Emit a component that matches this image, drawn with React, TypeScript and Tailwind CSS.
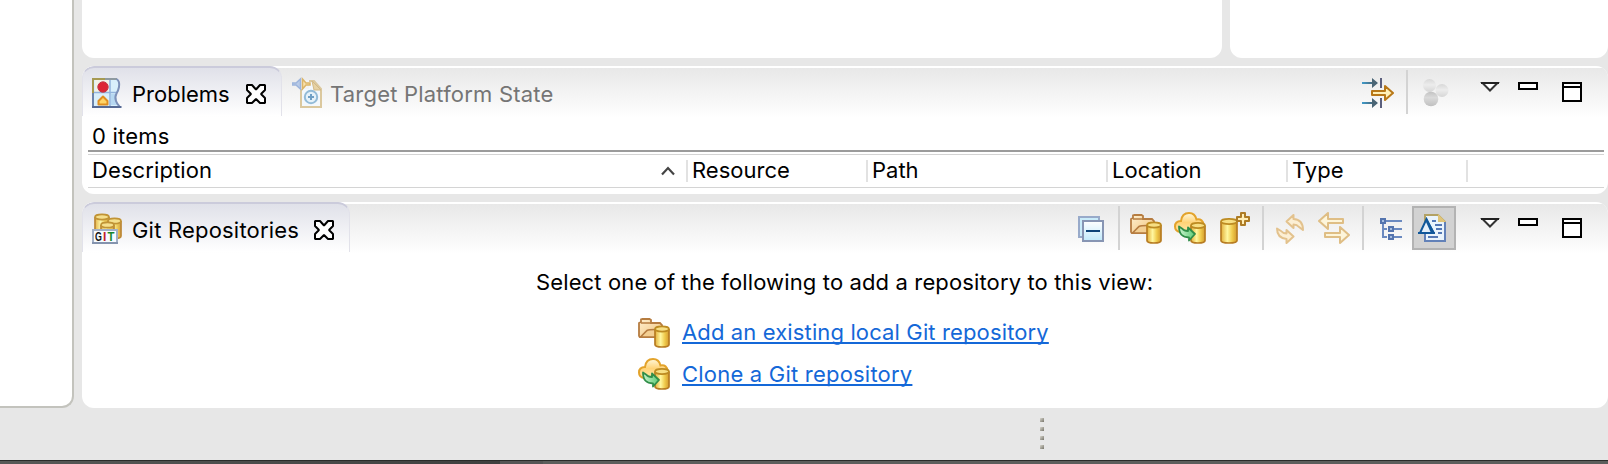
import React from "react";

type IconProps = { className?: string };

const Svg = ({ className = "", children, w = 32, h = 32 }: { className?: string; children: React.ReactNode; w?: number; h?: number }) => (
  <svg className={`block shrink-0 ${className}`} width={w} height={h} viewBox={`0 0 ${w} ${h}`} fill="none">
    {children}
  </svg>
);

const Gradients = () => (
  <svg className="absolute size-0" aria-hidden="true">
    <defs>
      <linearGradient id="gold" x1="0" x2="1" y1="0" y2="0">
        <stop offset="0" stopColor="#e3ae38" />
        <stop offset="0.4" stopColor="#fff7a0" />
        <stop offset="0.7" stopColor="#f0cb4c" />
        <stop offset="1" stopColor="#d39a2c" />
      </linearGradient>
      <linearGradient id="folder" x1="0" x2="1" y1="0" y2="1">
        <stop offset="0" stopColor="#fff0cf" />
        <stop offset="1" stopColor="#f0c27c" />
      </linearGradient>
      <linearGradient id="cloud" x1="0" x2="0" y1="0" y2="1">
        <stop offset="0" stopColor="#fff8dc" />
        <stop offset="0.5" stopColor="#ffd377" />
        <stop offset="1" stopColor="#ffe7a8" />
      </linearGradient>
      <linearGradient id="green" x1="0" x2="1" y1="0" y2="0">
        <stop offset="0" stopColor="#c9f2ce" />
        <stop offset="1" stopColor="#5dcb74" />
      </linearGradient>
      <linearGradient id="pane" x1="0" x2="0" y1="0" y2="1">
        <stop offset="0" stopColor="#ffffff" />
        <stop offset="1" stopColor="#bfe9fb" />
      </linearGradient>
      <linearGradient id="shaft" x1="0" x2="1" y1="0" y2="0">
        <stop offset="0" stopColor="#3f9bcb" />
        <stop offset="1" stopColor="#4a6474" />
      </linearGradient>
      <linearGradient id="ball" x1="0" x2="0" y1="0" y2="1">
        <stop offset="0" stopColor="#d8d8d8" />
        <stop offset="0.45" stopColor="#ececec" />
        <stop offset="1" stopColor="#d6d6d6" />
      </linearGradient>
      <linearGradient id="ballDark" x1="0" x2="0" y1="0" y2="1">
        <stop offset="0" stopColor="#c2c2c2" />
        <stop offset="0.4" stopColor="#dadada" />
        <stop offset="1" stopColor="#c0c0c0" />
      </linearGradient>
    </defs>
  </svg>
);

const Cylinder = ({ x, y, w, h }: { x: number; y: number; w: number; h: number }) => (
  <g>
    <path
      d={`M${x + 1} ${y + 3.5}V${y + h - 3.5}q0 2.5 ${w / 2 - 1} 2.5t${w / 2 - 1} -2.5V${y + 3.5}`}
      fill="url(#gold)"
      stroke="#b77c22"
      strokeWidth="1.7"
    />
    <ellipse cx={x + w / 2} cy={y + 3.5} rx={w / 2 - 1} ry="2.6" fill="#f7df83" stroke="#bd8b22" strokeWidth="1.7" />
  </g>
);

const ProblemsIcon = ({ className }: IconProps) => (
  <Svg className={className}>
    <path d="M1 3H25Q28 5 27.500 11Q27 15 25 18Q23.500 21 25 25Q26 28 28.500 31H1Z" fill="#d9effb" />
    <path d="M3 4H17V16H3Z" fill="#f2f3e6" />
    <path d="M19 18H23.500Q23 22 25.500 29H19Z" fill="#b7d8f1" />
    <path d="M2 16.500H25M18 4V30" stroke="#92b3dc" strokeWidth="1.500" />
    <path d="M1 31V3H13" stroke="#a69a52" strokeWidth="2" />
    <path d="M13 3H25" stroke="#8f9aa0" strokeWidth="2" />
    <path d="M24.500 3Q28 5 27 11Q26.500 14 24.500 17.500Q22.500 21 24 25Q25 28 27.500 30.500" stroke="#7d90b8" strokeWidth="2" />
    <path d="M1 17V31" stroke="#6c84ab" strokeWidth="2" />
    <path d="M0 31H29.500" stroke="#566a95" strokeWidth="2" />
    <circle cx="11" cy="11" r="5.200" fill="#dd2634" stroke="#c23a49" strokeWidth="1" />
    <path d="M6.500 28.500V25L11 20.500L15.500 25V28.500Z" fill="#ffd467" stroke="#e08f20" strokeWidth="2" strokeLinejoin="round" />
  </Svg>
);

const TargetIcon = ({ className }: IconProps) => (
  <Svg className={className}>
    <path d="M9 11V31H29V13L22 5H14" fill="#f3f8fc" stroke="#dbc89e" strokeWidth="2" />
    <path d="M20 5L29 14H22Z" fill="#e6d2a4" stroke="#d3b986" strokeWidth="1" />
    <path d="M8 4H17V13H8Z" fill="#f3f3f3" />
    <path d="M0 7H4L8.500 3V13L4 9H0Z" fill="#b9cbe7" stroke="#9db5dc" strokeWidth="1.500" />
    <path d="M10.500 3L14 7H18V9H14L10.500 13Z" fill="#f8e2af" stroke="#dcb568" strokeWidth="1.500" />
    <circle cx="19" cy="21" r="6.200" fill="#e6f2f9" stroke="#93bbd7" strokeWidth="2" />
    <path d="M16 21H22M19 18V24" stroke="#6f9fc4" strokeWidth="2" />
  </Svg>
);

const CloseIcon = ({ className }: IconProps) => (
  <Svg className={className} w={20} h={20}>
    <path
      d="M1 1H6L10 5.500L14 1H19V6L15 10L19 14V19H14L10 15L6 19H1V14L5 10L1 6Z"
      fill="#fff"
      stroke="#000"
      strokeWidth="2"
      strokeLinejoin="bevel"
    />
  </Svg>
);

const GitIcon = ({ className }: IconProps) => (
  <Svg className={className}>
    <g opacity="0.9">
      <Cylinder x={2} y={1.5} w={16} h={20} />
      <Cylinder x={15} y={5.5} w={15} h={22} />
      <Cylinder x={8} y={9.5} w={15} h={18} />
    </g>
    <path d="M1 18H25V32H1Z" fill="#f7fbff" />
    <path d="M1 32V18H25V32" stroke="#a3b0c6" strokeWidth="2" />
    <path d="M0 31H26" stroke="#8493ae" strokeWidth="2" />
    <g fontFamily="Liberation Sans, sans-serif" fontWeight="700" fontSize="12">
      <text transform="translate(3 29.200) scale(.74 1)" fill="#111">G</text>
      <text x="11" y="29.200" fill="#c21f2a">I</text>
      <text transform="translate(15.500 29.200) scale(.95 1)" fill="#16862c">T</text>
    </g>
  </Svg>
);

const MergeIcon = ({ className }: IconProps) => (
  <Svg className={className}>
    <path d="M0 6H12V8H0ZM0 26H12V28H0Z" fill="url(#shaft)" />
    <path d="M10 2L16 7L10 12ZM10 22L16 27L10 32Z" fill="#4a6575" />
    <path d="M19 2V12M19 22V32" stroke="#5b5f7d" strokeWidth="2" />
    <path d="M10 15H23V10L31 17L23 24V19H10Z" fill="#fff0b8" stroke="#b87818" strokeWidth="2" strokeLinejoin="round" />
  </Svg>
);

const BallsIcon = ({ className }: IconProps) => (
  <Svg className={className}>
    <circle cx="7.500" cy="9.500" r="6.500" fill="url(#ball)" />
    <circle cx="20" cy="14.500" r="6.500" fill="url(#ball)" />
    <circle cx="9" cy="23" r="7.300" fill="url(#ballDark)" />
  </Svg>
);

const MenuIcon = ({ className }: IconProps) => (
  <Svg className={className} w={20} h={10}>
    <path d="M2.500 1H17.500L10 8.500Z" fill="#fff" stroke="#333" strokeWidth="2" />
    <path d="M1 1H19" stroke="#222" strokeWidth="2" />
  </Svg>
);

const CollapseIcon = ({ className }: IconProps) => (
  <Svg className={className}>
    <path d="M3 5H23V25H3Z" fill="#c9ecfa" stroke="#98aaca" strokeWidth="2" />
    <path d="M7 9H27V29H7Z" fill="url(#pane)" stroke="#8795b3" strokeWidth="2" />
    <path d="M10 19H24" stroke="#0a4278" strokeWidth="2" />
  </Svg>
);

const FolderIcon = ({ className }: IconProps) => (
  <Svg className={className}>
    <path d="M1 20V7L3 6V3.500L4.500 3H11.500L13 4V7H22L24 9V20L22 21H2Z" fill="url(#folder)" stroke="#b67c40" strokeWidth="1.800" />
    <path d="M3 7H13" stroke="#b67c40" strokeWidth="1.500" />
    <path d="M2.500 21L9 14.500Q11 13.500 17 13.500H24V21Z" fill="#f3cf93" stroke="#b67c40" strokeWidth="1.600" />
    <Cylinder x={16} y={9.5} w={16} h={22.5} />
  </Svg>
);

const CloudIcon = ({ className }: IconProps) => (
  <Svg className={className}>
    <path
      d="M6 20Q1 19 1 14.500Q1 9 7 9Q8 1 15 1Q21 1 22.500 7.500Q29 6.500 29.500 13V20Z"
      fill="url(#cloud)"
      stroke="#e3a32b"
      strokeWidth="2"
    />
    <Cylinder x={16} y={10} w={16} h={22} />
    <path
      d="M5 14.500L8 16.500Q10 19 14 19V15.500L21 22L15 28.500V25.500Q5 25.500 5 14.500Z"
      fill="url(#green)"
      stroke="#308e49"
      strokeWidth="1.800"
      strokeLinejoin="round"
    />
  </Svg>
);

const CreateIcon = ({ className }: IconProps) => (
  <Svg className={className}>
    <Cylinder x={0} y={6} w={18} h={26} />
    <path d="M21 1H25V5H29V9H25V13H21V9H17V5H21Z" fill="#ffeeb6" stroke="#ad7b25" strokeWidth="2" strokeLinejoin="round" />
  </Svg>
);

const RefreshIcon = ({ className }: IconProps) => (
  <Svg className={className}>
    <path d="M10.500 9.500L17.500 3V7Q27 7.500 27 18L23 15Q21 12.500 17.500 12.500V16Z" fill="#fcefd4" stroke="#e3c28d" strokeWidth="2" strokeLinejoin="round" />
    <path d="M17.500 24.500L10.500 31V27Q1 26 1 16.500L5 19Q7 21.500 10.500 21.500V18Z" fill="#fcefd4" stroke="#e3c28d" strokeWidth="2" strokeLinejoin="round" />
  </Svg>
);

const FetchIcon = ({ className }: IconProps) => (
  <Svg className={className}>
    <path d="M1 9L10 1V7H25V11H10V17Z" fill="#fdf5da" stroke="#dfbe85" strokeWidth="2" strokeLinejoin="round" />
    <path d="M31 23L22 15V21H7V25H22V31Z" fill="#fdf5da" stroke="#dfbe85" strokeWidth="2" strokeLinejoin="round" />
  </Svg>
);

const TreeIcon = ({ className }: IconProps) => (
  <Svg className={className} w={22} h={32}>
    <path d="M3 12V25H7M3 17H7M6 9H22M14 17H22M14 25H22" stroke="#6b8ac0" strokeWidth="2" />
    <path d="M1 7H5V11H1ZM9 15H13V19H9ZM9 23H13V27H9Z" fill="#a7bee0" stroke="#5474ae" strokeWidth="2" />
  </Svg>
);

const DocIcon = ({ className }: IconProps) => (
  <Svg className={className} w={28}>
    <path d="M7 3H20L27 10V29H7Z" fill="#eaf4fc" stroke="#b3a264" strokeWidth="2" />
    <path d="M7 16V29H27V10" stroke="#6281b8" strokeWidth="2" />
    <path d="M20 2L28 10H20Z" fill="#e0c478" />
    <path d="M14 9H18M17 13H24M18 17H24M20 21H24M10 25H20" stroke="#5478b5" strokeWidth="2" />
    <path d="M2 21L8.500 7L15.500 21Z" fill="#e4eff9" stroke="#10579a" strokeWidth="2" />
    <path d="M8.500 6L17 21H13L8 10Z" fill="#10579a" />
    <path d="M0 21H17" stroke="#10579a" strokeWidth="2" />
  </Svg>
);

const Divider = ({ className }: IconProps) => <span className={`mt-1 h-11 w-0.5 shrink-0 bg-[#d3d3d3] ${className}`} />;

const ViewControls = () => (
  <div className="flex w-[128px] shrink-0 pt-4">
    <MenuIcon />
    <span className="ml-[18px] h-2 w-5 border-2 border-black bg-white" />
    <span className="ml-6 h-5 w-5 border-2 border-black bg-white pt-0.5">
      <span className="block h-0.5 bg-black" />
    </span>
  </div>
);

const Tab = ({ icon, className, children }: { icon: React.ReactNode; className: string; children: React.ReactNode }) => (
  <div
    className={`flex h-[50px] shrink-0 rounded-t-[12px] border-x border-t-2 border-x-[#e2e2ea] border-t-[#cbcbdb] bg-linear-to-b from-[#e0e1e9] to-white pl-[9px] ${className}`}
  >
    {icon}
    {children}
  </div>
);

const Column = ({ label, className }: { label?: string; className: string }) => (
  <div className={`flex h-8 shrink-0 ${className}`}>
    <span className="mt-[5px] h-[22px] w-0.5 shrink-0 bg-[#e2e2e2]" />
    {label && <span className="ml-1 leading-[30px]">{label}</span>}
  </div>
);

export default function App() {
  return (
    <div className="flex h-[464px] w-[1608px] flex-col overflow-hidden bg-[#e7e7e7] font-['Inter',sans-serif] text-[22px] leading-8 whitespace-nowrap text-black">
      <Gradients />
      <div className="flex h-[408px] shrink-0">
        <div className="h-[408px] w-[74px] shrink-0 rounded-br-[12px] border-r-2 border-b-2 border-[#c3c3bd] bg-white" />
        <div className="ml-2 flex w-[1526px] flex-col gap-2">
          <div className="flex h-[58px] shrink-0 gap-2">
            <div className="w-[1140px] rounded-b-[12px] bg-white" />
            <div className="flex-1 rounded-b-[12px] bg-white" />
          </div>

          <section className="h-[128px] shrink-0 overflow-hidden rounded-[12px] bg-white">
            <header className="flex h-[52px] bg-linear-to-b from-[#e7e7e7] to-white shadow-[inset_0_2px_0_#fff]">
              <Tab className="w-[200px]" icon={<ProblemsIcon className="mt-2" />}>
                <span className="mt-[10px] ml-2 w-[114px]">Problems</span>
                <CloseIcon className="mt-4" />
              </Tab>
              <TargetIcon className="mt-[10px] ml-[10px]" />
              <span className="mt-3 ml-[6px] tracking-[0.2px] text-[#757575]">Target Platform State</span>
              <div className="ml-auto flex">
                <MergeIcon className="mt-[10px]" />
                <Divider className="ml-3" />
                <BallsIcon className="mt-[10px] mr-[26px] ml-[14px]" />
                <ViewControls />
              </div>
            </header>
            <div className="h-8 pl-[10px] leading-9 tracking-[0.2px]">0 items</div>
            <div className="mr-1 ml-1.5 h-0.5 bg-[#9b9b9b]" />
            <div className="mt-0.5 mr-1 ml-1.5 flex h-[34px] border-y border-[#d4d4d4]">
              <div className="flex w-[598px] shrink-0 justify-between">
                <span className="pl-1 leading-[30px] tracking-[0.1px]">Description</span>
                <Svg className="mt-[10px] mr-[10px]" w={16} h={12}>
                  <path d="M2 9.500L8 3L14 9.500" stroke="#444" strokeWidth="2.200" />
                </Svg>
              </div>
              <Column label="Resource" className="w-[180px]" />
              <Column label="Path" className="w-[240px]" />
              <Column label="Location" className="w-[180px]" />
              <Column label="Type" className="w-[180px]" />
              <Column className="w-[2px]" />
            </div>
          </section>

          <section className="h-[206px] shrink-0 overflow-hidden rounded-[12px] bg-white">
            <header className="flex h-[52px] bg-linear-to-b from-[#e7e7e7] to-white shadow-[inset_0_2px_0_#fff]">
              <Tab className="w-[268px]" icon={<GitIcon className="mt-2" />}>
                <span className="mt-[10px] ml-2 w-[182px] tracking-[0.2px]">Git Repositories</span>
                <CloseIcon className="mt-4" />
              </Tab>
              <div className="ml-auto flex">
                <CollapseIcon className="mt-[10px]" />
                <Divider className="ml-[10px]" />
                <FolderIcon className="mt-[10px] ml-[10px]" />
                <CloudIcon className="mt-[10px] ml-3" />
                <CreateIcon className="mt-[10px] ml-[14px]" />
                <Divider className="ml-[10px]" />
                <RefreshIcon className="mt-[10px] ml-3" />
                <FetchIcon className="mt-[10px] ml-[10px]" />
                <Divider className="ml-3" />
                <TreeIcon className="mt-[10px] ml-4" />
                <span className="mt-1 mr-6 ml-[10px] h-11 w-11 border-2 border-[#b3b3b3] bg-[#d2d2d2] pt-1 pl-1">
                  <DocIcon />
                </span>
                <ViewControls />
              </div>
            </header>
            <p className="mt-3 ml-[454px] tracking-[0.13px]">Select one of the following to add a repository to this view:</p>
            <div className="mt-[18px] ml-[556px] flex h-8">
              <FolderIcon />
              <a className="ml-3 tracking-[0.13px] text-[#1468d8] underline decoration-2 underline-offset-2 [text-decoration-skip-ink:none]">
                Add an existing local Git repository
              </a>
            </div>
            <div className="mt-[10px] ml-[556px] flex h-8">
              <CloudIcon />
              <a className="ml-3 tracking-[0.21px] text-[#1468d8] underline decoration-2 underline-offset-2 [text-decoration-skip-ink:none]">
                Clone a Git repository
              </a>
            </div>
          </section>
        </div>
      </div>
      <footer className="flex h-[52px] shrink-0 flex-col gap-[5px] pt-[10px] pl-[1040px]">
        {[0, 1, 2, 3].map((i) => (
          <span key={i} className="h-1 w-1 bg-linear-to-br from-[#d8d6ce] to-[#77756a]" />
        ))}
      </footer>
      <div className="flex h-1 shrink-0 border-t border-[#2a2c2a] bg-[#4e504e]">
        <span className="w-[500px] bg-linear-to-r from-[#575957] to-[#3f403f]" />
        <span className="w-[43px] bg-[#555]" />
        <span className="flex-1 bg-[#5c5e5c]" />
      </div>
    </div>
  );
}
